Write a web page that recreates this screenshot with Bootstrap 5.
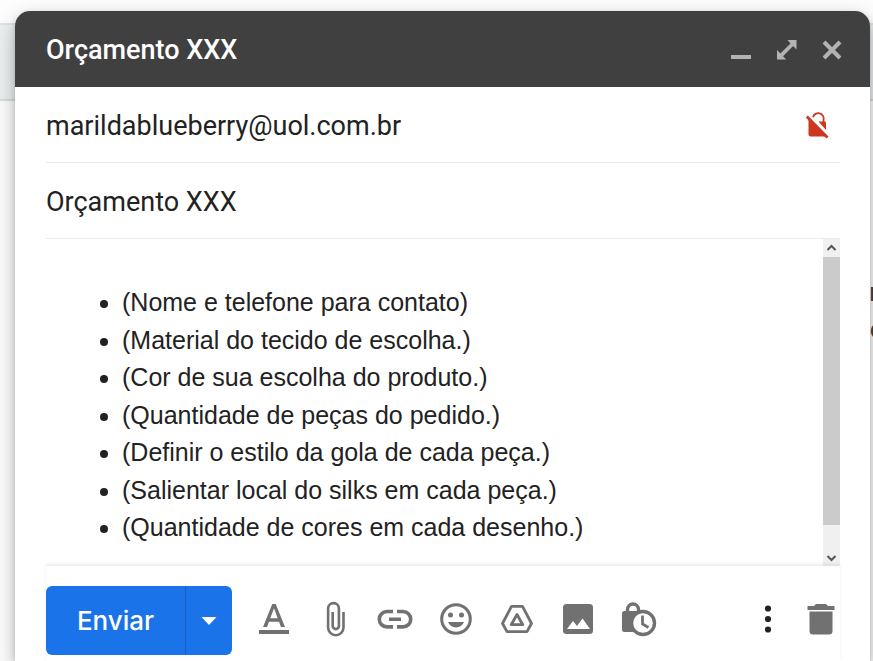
<!DOCTYPE html>
<html lang="pt-BR">
<head>
<meta charset="utf-8">
<meta name="viewport" content="width=device-width, initial-scale=1">
<title>Orçamento XXX</title>
<link href="https://cdn.jsdelivr.net/npm/bootstrap@5.3.0/dist/css/bootstrap.min.css" rel="stylesheet">
<style>
  body { font-family: Roboto, "Liberation Sans", sans-serif; font-size: 27px; color: #222; background: #fdfdfd; }
  .mailbox { z-index: 0; }
  .mailbox-bar { height: 78px; margin-top: 23px; background: #ecf0f1; border-top: 2px solid #e0e4e6; border-bottom: 2px solid #d8dde0; }
  .mailbox-text { margin-top: 173px; font-size: 25px; line-height: 37px; color: #444; margin-right: -10px; }
  .compose { z-index: 1; margin: 11px 3px 0 15px; border-radius: 15px 15px 0 0; box-shadow: 0 8px 20px rgba(0,0,0,.3), 0 2px 5px rgba(0,0,0,.12); }
  .compose-head { height: 76px; padding: 2px 23px 0 31px; background: #404040; border-radius: 15px 15px 0 0; font-weight: 500; }
  .head-title { font-size: 27px; line-height: 36px; }
  .win-btn, .tool { line-height: 0; flex: none; }
  .fields { padding: 0 30px 0 31px; }
  .field-row { height: 76px; padding-top: 2px; border-bottom: 1px solid #ebebeb; }
  .field-row input { font-size: 27px; line-height: 36px; color: #222; min-width: 0; }
  .message { height: 327px; }
  .message-text { padding: 45px 0 0 76px; font-family: "Liberation Sans", sans-serif; font-size: 25px; line-height: 1.5; outline: 0; }
  .message-text ul { padding: 0; }
  .scroller { width: 17px; background: #f0f0f0; }
  .scroller button { height: 18px; line-height: 0; }
  .scroller-thumb { height: 268px; background: #cbcbcb; }
  .toolbar { padding: 20px 0 6px; box-shadow: 0 -2px 3px rgba(0,0,0,.08); }
  .send { height: 69px; background: #1a73e8; border-radius: 6px; }
  .send button { color: #fff; font-family: Inter, Roboto, sans-serif; font-size: 26px; font-weight: 500; }
  .send-main { width: 139px; }
  .send-more { width: 47px; border-left: 1px solid #185fc4 !important; line-height: 0; }
  .tools { gap: 25px; padding: 0 0 4px 23px; }
  .tools-end { gap: 17px; padding: 0 1px 4px 0; }
</style>
<script src="https://cdn.jsdelivr.net/npm/bootstrap@5.3.0/dist/js/bootstrap.bundle.min.js"></script>
</head>
<body class="position-relative overflow-hidden vh-100">

<div class="mailbox position-absolute top-0 start-0 end-0" aria-hidden="true">
  <div class="mailbox-bar"></div>
  <div class="mailbox-text text-end">n<br>e</div>
</div>

<main class="compose position-relative bg-white">
  <header class="compose-head d-flex align-items-center text-white">
    <h1 class="head-title mb-0 flex-grow-1">Orçamento XXX</h1>
    <div class="d-flex align-items-center gap-3">
      <button type="button" class="win-btn btn p-0 border-0" aria-label="Minimizar"><svg width="30" height="30" viewBox="0 0 30 30"><path d="M6 20h20v4H6z" fill="#b3b3b3"/></svg></button>
      <button type="button" class="win-btn btn p-0 border-0" aria-label="Tela cheia"><svg width="30" height="30" viewBox="0 0 30 30"><path d="M16.500 5H25.500v9.500l-3.400-3.400L12 21.200l3.400 3.400H6v-9.500l3.400 3.400L19.500 8.400z" fill="#b3b3b3"/></svg></button>
      <button type="button" class="win-btn btn p-0 border-0" aria-label="Fechar"><svg width="30" height="30" viewBox="0 0 30 30"><path d="M7 7l16 16M23 7L7 23" fill="none" stroke="#b3b3b3" stroke-width="4"/></svg></button>
    </div>
  </header>

  <div class="fields">
    <div class="field-row d-flex align-items-center">
      <input type="email" class="flex-grow-1 border-0 p-0 bg-transparent" aria-label="Para" value="marildablueberry@uol.com.br">
      <button type="button" class="tool btn p-0 border-0 me-2" aria-label="Sem criptografia"><svg width="30" height="30" viewBox="0 0 30 30"><path d="M6.500 8.500L23.500 25.500H8.500a2 2 0 0 1-2-2z" fill="#cb3720"/><path d="M11 6.200a5.300 5.300 0 0 1 10.500 2.800v3" fill="none" stroke="#cb3720" stroke-width="1.800"/><path d="M16.500 10.500h6.300a1.200 1.200 0 0 1 1.200 1.200V19z" fill="#cb3720"/><path d="M4.800 5.500L25.500 26.500" stroke="#cb3720" stroke-width="2.800"/></svg></button>
    </div>
    <div class="field-row d-flex align-items-center">
      <input type="text" class="flex-grow-1 border-0 p-0 bg-transparent" aria-label="Assunto" value="Orçamento XXX">
    </div>
    <div class="message d-flex">
      <div class="message-text flex-grow-1" contenteditable="true" role="textbox" aria-label="Corpo da mensagem" spellcheck="false">
        <ul class="mb-0">
          <li>(Nome e telefone para contato)</li>
          <li>(Material do tecido de escolha.)</li>
          <li>(Cor de sua escolha do produto.)</li>
          <li>(Quantidade de peças do pedido.)</li>
          <li>(Definir o estilo da gola de cada peça.)</li>
          <li>(Salientar local do silks em cada peça.)</li>
          <li>(Quantidade de cores em cada desenho.)</li>
        </ul>
      </div>
      <div class="scroller d-flex flex-column">
        <button type="button" class="btn p-0 border-0 rounded-0" aria-label="Rolar para cima"><svg width="17" height="18" viewBox="0 0 17 18"><path d="M4.500 11L8.500 7l4 4" fill="none" stroke="#555" stroke-width="2"/></svg></button>
        <div class="scroller-thumb"></div>
        <button type="button" class="btn p-0 border-0 rounded-0 mt-auto" aria-label="Rolar para baixo"><svg width="17" height="18" viewBox="0 0 17 18"><path d="M4.500 8L8.500 12l4-4" fill="none" stroke="#555" stroke-width="2"/></svg></button>
      </div>
    </div>

    <div class="toolbar d-flex align-items-center bg-white position-relative">
      <div class="send d-flex overflow-hidden">
        <button type="button" class="send-main btn p-0 border-0 rounded-0">Enviar</button>
        <button type="button" class="send-more btn p-0 border-0 rounded-0" aria-label="Mais opções de envio"><svg width="16" height="8" viewBox="0 0 16 8"><path d="M.5 0h15L8 8z" fill="#fff"/></svg></button>
      </div>
      <div class="tools d-flex align-items-center flex-grow-1">
        <button type="button" class="tool btn p-0 border-0" aria-label="Formatação"><svg width="36" height="36" viewBox="0 0 36 36" fill="#717171"><path d="M4 29h30v4H4z"/><path d="M17.300 3h3.400L30 26h-4l-2-5.300H14L12 26H8zM15.300 17.200h7.400L19 7.300z"/></svg></button>
        <button type="button" class="tool btn p-0 border-0" aria-label="Anexar arquivos"><svg width="36" height="36" viewBox="0 0 36 36" fill="none" stroke="#717171" stroke-width="2.600"><path d="M27.500 11v15.500a7.700 7.700 0 0 1-15.400 0V7.500a5.400 5.400 0 0 1 10.800 0V25a3.100 3.100 0 0 1-6.200 0V11"/></svg></button>
        <button type="button" class="tool btn p-0 border-0" aria-label="Inserir link"><svg width="36" height="36" viewBox="0 0 36 36" fill="none" stroke="#717171" stroke-width="3.600"><path d="M16 10.500H10a7.700 7.700 0 0 0 0 15.400h6M20 10.500h6a7.700 7.700 0 0 1 0 15.400h-6M12 18.200h12"/></svg></button>
        <button type="button" class="tool btn p-0 border-0" aria-label="Inserir emoji"><svg width="36" height="36" viewBox="0 0 36 36" fill="#717171"><circle cx="18" cy="18" r="14.300" fill="none" stroke="#717171" stroke-width="3"/><circle cx="12.500" cy="14" r="2.500"/><circle cx="23.500" cy="14" r="2.500"/><path d="M10 21h16a8.600 8.600 0 0 1-16 0z"/></svg></button>
        <button type="button" class="tool btn p-0 border-0" aria-label="Inserir arquivos do Drive"><svg width="36" height="36" viewBox="0 0 36 36" fill="none" stroke="#717171" stroke-width="2.800" stroke-linejoin="round"><path d="M12.500 5.300h11L32.500 22.500l-4.500 8.200H8L3.500 22.500z"/><path d="M18 13.500l5.800 10.200H12.200z"/></svg></button>
        <button type="button" class="tool btn p-0 border-0" aria-label="Inserir foto"><svg width="36" height="36" viewBox="0 0 36 36"><rect x="3" y="3" width="30" height="30" rx="3.500" fill="#717171"/><path d="M7 28l6-8 4 5 5.500-7.500L30 28z" fill="#fff"/></svg></button>
        <button type="button" class="tool btn p-0 border-0" aria-label="Modo confidencial"><svg width="36" height="36" viewBox="0 0 36 36"><rect x="1" y="10" width="22" height="21" rx="2.500" fill="#717171"/><path d="M6.500 11V8.500a5.500 5.500 0 0 1 11 0V11" fill="none" stroke="#717171" stroke-width="3.400"/><circle cx="22" cy="22" r="11.500" fill="#fff" stroke="#717171" stroke-width="3.400"/><path d="M21.500 14.500V23l6 3.500" fill="none" stroke="#717171" stroke-width="2.800"/></svg></button>
      </div>
      <div class="tools-end d-flex align-items-center">
        <button type="button" class="tool btn p-0 border-0" aria-label="Mais opções"><svg width="36" height="36" viewBox="0 0 36 36" fill="#222"><circle cx="18" cy="7.500" r="3.100"/><circle cx="18" cy="18" r="3.100"/><circle cx="18" cy="28.500" r="3.100"/></svg></button>
        <button type="button" class="tool btn p-0 border-0" aria-label="Descartar rascunho"><svg width="36" height="36" viewBox="0 0 36 36" fill="#717171"><path d="M4.500 5H11l2-2h10l2 2h6.500v4h-27zM6.500 10.500h23V30a3.500 3.500 0 0 1-3.500 3.500H10A3.500 3.500 0 0 1 6.500 30z"/></svg></button>
      </div>
    </div>
  </div>
</main>
</body>
</html>
